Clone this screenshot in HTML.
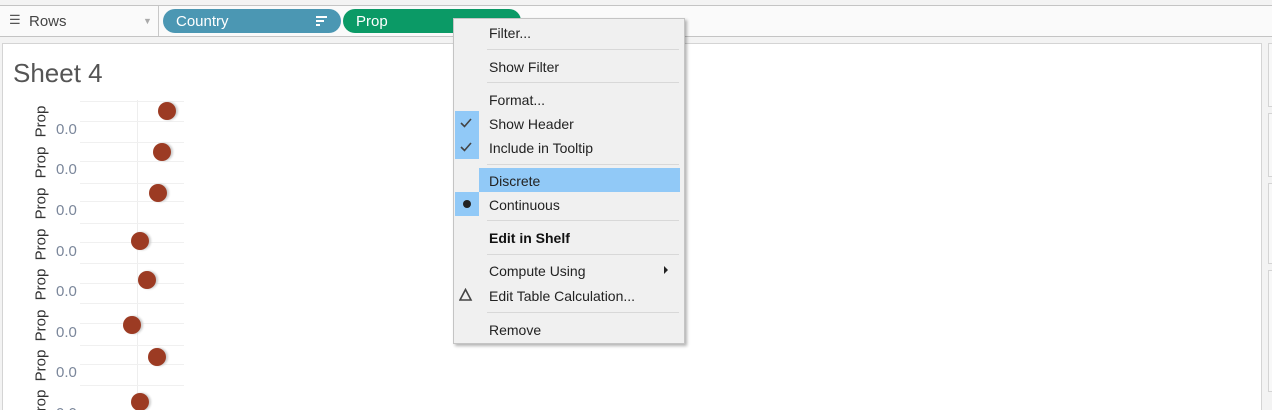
<!DOCTYPE html>
<html><head><style>
*{margin:0;padding:0;box-sizing:border-box}
html,body{width:1272px;height:410px;overflow:hidden}
body{background:#f3f3f3;font-family:"Liberation Sans",sans-serif;position:relative}
.a{position:absolute}
.mi{position:absolute;left:489px;font-size:14px;color:#222;line-height:18px}
.sep{position:absolute;left:487px;width:192px;height:1px;background:#d8d8d8}
.p{position:absolute;left:21px;transform:rotate(-90deg);font-size:15px;color:#333;width:40px;text-align:center}
.z{position:absolute;left:56px;font-size:15px;color:#7a869a}
.g{position:absolute;left:80px;width:104px;height:1px;background:#f0f0f0}
.d{position:absolute;width:18px;height:18px;border-radius:50%;background:#9c3b23;box-shadow:2px 0 2px #ccc}
</style></head><body>
<div class="a" style="left:0;top:5px;width:1272px;height:32px;background:#fafafa;border-top:1px solid #c4c4c4;border-bottom:1px solid #c4c4c4"></div>
<div class="a" style="left:158px;top:6px;width:1px;height:30px;background:#c8c8c8"></div>
<div class="a" style="left:9px;top:14px;font-size:13px;color:#555;line-height:12px">&#9776;</div>
<div class="a" style="left:29px;top:13px;font-size:15px;color:#444">Rows</div>
<div class="a" style="left:143px;top:16px;font-size:9px;color:#aaa">&#9660;</div>
<div class="a" style="left:163px;top:9px;width:178px;height:24px;border-radius:12px;background:#4b97b3"></div>
<div class="a" style="left:176px;top:13px;font-size:15px;color:#fff">Country</div>
<div class="a" style="left:316px;top:16px;width:11px;height:2px;background:#fff"></div>
<div class="a" style="left:316px;top:20px;width:8px;height:2px;background:#fff"></div>
<div class="a" style="left:316px;top:24px;width:4px;height:2px;background:#fff"></div>
<div class="a" style="left:343px;top:9px;width:178px;height:24px;border-radius:12px;background:#0b9a66"></div>
<div class="a" style="left:356px;top:13px;font-size:15px;color:#fff">Prop</div>
<div class="a" style="left:2px;top:43px;width:1260px;height:370px;background:#fff;border:1px solid #d4d4d4"></div>
<div class="a" style="left:1268px;top:43px;width:8px;height:64px;border:1px solid #d4d4d4;background:#f8f8f8"></div>
<div class="a" style="left:1268px;top:113px;width:8px;height:64px;border:1px solid #d4d4d4;background:#f8f8f8"></div>
<div class="a" style="left:1268px;top:183px;width:8px;height:81px;border:1px solid #d4d4d4;background:#f8f8f8"></div>
<div class="a" style="left:1268px;top:270px;width:8px;height:122px;border:1px solid #d4d4d4;background:#f8f8f8"></div>
<div class="a" style="left:13px;top:58px;font-size:26px;color:#555;font-weight:300">Sheet 4</div>
<div class="a" style="left:137px;top:100px;width:1px;height:310px;background:#eee"></div>
<div class="g" style="top:101px"></div><div class="g" style="top:121px"></div><div class="g" style="top:142px"></div><div class="g" style="top:161px"></div><div class="g" style="top:183px"></div><div class="g" style="top:201px"></div><div class="g" style="top:223px"></div><div class="g" style="top:242px"></div><div class="g" style="top:263px"></div><div class="g" style="top:283px"></div><div class="g" style="top:303px"></div><div class="g" style="top:323px"></div><div class="g" style="top:345px"></div><div class="g" style="top:364px"></div><div class="g" style="top:385px"></div>
<div class="p" style="top:113px">Prop</div><div class="p" style="top:154px">Prop</div><div class="p" style="top:195px">Prop</div><div class="p" style="top:236px">Prop</div><div class="p" style="top:276px">Prop</div><div class="p" style="top:317px">Prop</div><div class="p" style="top:357px">Prop</div><div class="p" style="top:397px">Prop</div>
<div class="z" style="top:121px">0.0</div><div class="z" style="top:161px">0.0</div><div class="z" style="top:202px">0.0</div><div class="z" style="top:243px">0.0</div><div class="z" style="top:283px">0.0</div><div class="z" style="top:324px">0.0</div><div class="z" style="top:364px">0.0</div><div class="z" style="top:405px">0.0</div>
<div class="d" style="left:158px;top:102px"></div><div class="d" style="left:153px;top:143px"></div><div class="d" style="left:149px;top:184px"></div><div class="d" style="left:131px;top:232px"></div><div class="d" style="left:138px;top:271px"></div><div class="d" style="left:123px;top:316px"></div><div class="d" style="left:148px;top:348px"></div><div class="d" style="left:131px;top:393px"></div>
<div class="a" style="left:453px;top:18px;width:232px;height:326px;background:#f0f0f0;border:1px solid #c4c4c4;box-shadow:2px 2px 3px rgba(0,0,0,.3)"></div>
<div class="a" style="left:455px;top:111px;width:24px;height:48px;background:#91c9f7"></div>
<div class="a" style="left:479px;top:168px;width:201px;height:24px;background:#91c9f7"></div>
<div class="a" style="left:455px;top:192px;width:24px;height:24px;background:#91c9f7"></div>
<div class="mi" style="top:24px">Filter...</div>
<div class="sep" style="top:49px"></div>
<div class="mi" style="top:58px">Show Filter</div>
<div class="sep" style="top:82px"></div>
<div class="mi" style="top:91px">Format...</div>
<div class="mi" style="top:115px">Show Header</div>
<div class="mi" style="top:139px">Include in Tooltip</div>
<svg class="a" style="left:459px;top:117px" width="14" height="40"><path d="M2 6l3.5 3.5L12 2M2 30l3.5 3.5L12 26" stroke="#444" stroke-width="1.6" fill="none"/></svg>
<div class="sep" style="top:164px"></div>
<div class="mi" style="top:172px">Discrete</div>
<div class="mi" style="top:196px">Continuous</div>
<div class="a" style="left:463px;top:200px;width:8px;height:8px;border-radius:50%;background:#222"></div>
<div class="sep" style="top:220px"></div>
<div class="mi" style="top:229px;font-weight:bold;color:#111">Edit in Shelf</div>
<div class="sep" style="top:254px"></div>
<div class="mi" style="top:262px">Compute Using</div>
<div class="a" style="left:664px;top:266px;width:0;height:0;border-left:4px solid #222;border-top:4px solid transparent;border-bottom:4px solid transparent"></div>
<div class="mi" style="top:287px">Edit Table Calculation...</div>
<svg class="a" style="left:459px;top:288px" width="14" height="14"><path d="M6.5 1.5L12 12H1z" stroke="#444" stroke-width="1.6" fill="none"/></svg>
<div class="sep" style="top:312px"></div>
<div class="mi" style="top:321px">Remove</div>
</body></html>
